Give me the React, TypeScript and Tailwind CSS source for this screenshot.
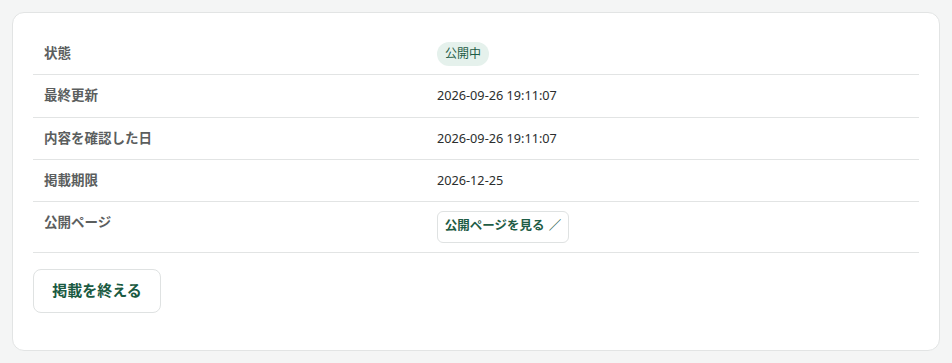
import React from "react";

const font = { fontFamily: '"Noto Sans", "Noto Sans CJK JP", sans-serif' };

function Row({ label, children, tall }: { label: string; children: React.ReactNode; tall?: boolean }) {
  return (
    <div className={`flex border-b border-[#e2e4e4] ${tall ? "h-[50.5px] items-start" : "h-[42.25px] items-center"}`}>
      <div className={`w-[404px] pl-[11px] text-[13.5px] leading-[21px] font-semibold text-[#5b5e5e] ${tall ? "pt-[10px]" : ""}`}>
        {label}
      </div>
      <div className={`flex-1 text-[12.7px] text-[#2b2e2e] ${tall ? "pt-[8.5px]" : ""}`}>{children}</div>
    </div>
  );
}

export default function App() {
  return (
    <div className="min-h-[363px] bg-[#f4f5f5] p-3" style={font}>
      <div className="rounded-xl border border-[#e2e4e4] bg-white px-5 pt-5 pb-[37px]">
        <Row label="状態">
          <span className="inline-flex h-6 items-center rounded-full bg-[#e5f1ec] px-2 text-[12px] text-[#1e5c45]">
            公開中
          </span>
        </Row>
        <Row label="最終更新">2026-09-26 19:11:07</Row>
        <Row label="内容を確認した日">2026-09-26 19:11:07</Row>
        <Row label="掲載期限">2026-12-25</Row>
        <Row label="公開ページ" tall>
          <button className="flex h-8 w-[132px] items-center justify-center rounded-md border border-[#dfe2e2] bg-white text-[12.5px] font-semibold text-[#1e5c45]">
            公開ページを見る <span className="ml-1 font-normal">／</span>
          </button>
        </Row>
        <button className="mt-4 flex h-11 w-32 items-center justify-center rounded-lg border border-[#dfe2e2] bg-white text-[15px] font-bold text-[#1a5a42]">
          掲載を終える
        </button>
      </div>
    </div>
  );
}
